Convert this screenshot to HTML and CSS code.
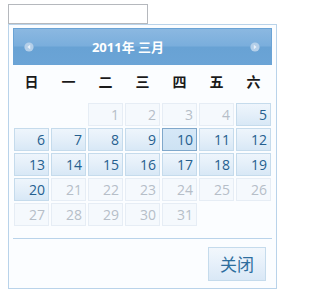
FILE: index.html
```html
<!DOCTYPE html>
<html lang="zh-CN">
<head>
<meta charset="utf-8">
<title>日历</title>
<link rel="stylesheet" href="styles.css">
</head>
<body>
<input class="date-input" type="text">
<div class="datepicker">
  <div class="dp-header">
    <span class="dp-nav dp-prev" title="上月">
      <svg width="10" height="10" viewBox="0 0 10 10"><circle cx="5" cy="5" r="4.6" fill="#b4cfe9"/><path d="M6.2 2.8 L3.4 5 L6.2 7.2 Z" fill="#e9f2fb"/></svg>
    </span>
    <div class="dp-title">2011年 三月</div>
    <span class="dp-nav dp-next" title="下月">
      <svg width="10" height="10" viewBox="0 0 10 10"><circle cx="5" cy="5" r="4.6" fill="#b4cfe9"/><path d="M3.8 2.8 L6.6 5 L3.8 7.2 Z" fill="#e9f2fb"/></svg>
    </span>
  </div>
  <div class="dp-weekdays">
    <span>日</span><span>一</span><span>二</span><span>三</span><span>四</span><span>五</span><span>六</span>
  </div>
  <div class="dp-grid">
    <span class="dp-empty"></span><span class="dp-empty"></span>
    <span class="dp-day dp-off">1</span><span class="dp-day dp-off">2</span><span class="dp-day dp-off">3</span><span class="dp-day dp-off">4</span><span class="dp-day">5</span>
    <span class="dp-day">6</span><span class="dp-day">7</span><span class="dp-day">8</span><span class="dp-day">9</span><span class="dp-day dp-active">10</span><span class="dp-day">11</span><span class="dp-day">12</span>
    <span class="dp-day">13</span><span class="dp-day">14</span><span class="dp-day">15</span><span class="dp-day">16</span><span class="dp-day">17</span><span class="dp-day">18</span><span class="dp-day">19</span>
    <span class="dp-day">20</span><span class="dp-day dp-off">21</span><span class="dp-day dp-off">22</span><span class="dp-day dp-off">23</span><span class="dp-day dp-off">24</span><span class="dp-day dp-off">25</span><span class="dp-day dp-off">26</span>
    <span class="dp-day dp-off">27</span><span class="dp-day dp-off">28</span><span class="dp-day dp-off">29</span><span class="dp-day dp-off">30</span><span class="dp-day dp-off">31</span><span class="dp-empty"></span><span class="dp-empty"></span>
  </div>
  <div class="dp-buttonpane">
    <button class="dp-close" type="button">关闭</button>
  </div>
</div>
</body>
</html>
```
FILE: styles.css
```css
body {
  margin: 4px 8px 8px 8px;
  background: #ffffff;
  font-family: "Open Sans", "Noto Sans CJK SC", sans-serif;
}

.date-input {
  display: block;
  box-sizing: border-box;
  width: 140px;
  height: 20px;
  margin: 0;
  padding: 0 2px;
  border: 1px solid #b5b8bd;
  background: #ffffff;
}

.datepicker {
  box-sizing: border-box;
  width: 269px;
  padding: 3px 4px 7px 4px;
  border: 1px solid #b9d3ea;
  background: #fbfdff;
}

.dp-header {
  box-sizing: border-box;
  height: 37px;
  display: flex;
  align-items: center;
  border: 1px solid #6aa3d5;
  background: linear-gradient(to bottom, #8bb8e1 0%, #7aaedc 48%, #68a2d4 52%, #6ba4d6 100%);
}

.dp-nav {
  display: flex;
  width: 10px;
  height: 10px;
}

.dp-prev { margin-left: 10px; }
.dp-next { margin-right: 11px; }

.dp-title {
  flex: 1;
  text-align: center;
  padding-right: 28px;
  color: #ffffff;
  font-weight: bold;
  font-size: 13px;
  line-height: 18px;
}

.dp-weekdays {
  display: grid;
  grid-template-columns: repeat(7, 1fr);
  height: 37px;
  box-sizing: border-box;
  padding-top: 7px;
  font-size: 14px;
  font-weight: bold;
  line-height: 20px;
  color: #1a1a1a;
  text-align: center;
}

.dp-grid {
  display: grid;
  grid-template-columns: repeat(7, 1fr);
  grid-auto-rows: 23px;
  gap: 2px;
  padding: 1px;
}

.dp-day {
  box-sizing: border-box;
  border: 1px solid #c5dbec;
  background: linear-gradient(to bottom, #eef5fc 0%, #e4eff9 50%, #d8e8f6 100%);
  color: #255f8f;
  font-size: 14px;
  line-height: 21px;
  text-align: right;
  padding-right: 3px;
}

.dp-off {
  border-color: #e6edf5;
  background: #f5f9fd;
  color: #b6bec8;
}

.dp-active {
  border-color: #80a8cb;
  background: linear-gradient(to bottom, #d6e8f7 0%, #cde2f3 100%);
}

.dp-buttonpane {
  display: flex;
  justify-content: flex-end;
  margin-top: 11px;
  padding-top: 8px;
  border-top: 1px solid #b9d3ea;
}

.dp-close {
  box-sizing: border-box;
  width: 58px;
  height: 34px;
  margin: 0 6px 0 0;
  padding: 0;
  border: 1px solid #c5dbec;
  background: linear-gradient(to bottom, #f2f7fc 0%, #e6f0fa 50%, #d9e8f6 100%);
  color: #2e6e9e;
  font-family: "Noto Sans CJK SC", sans-serif;
  font-size: 17px;
  line-height: 30px;
}
```
